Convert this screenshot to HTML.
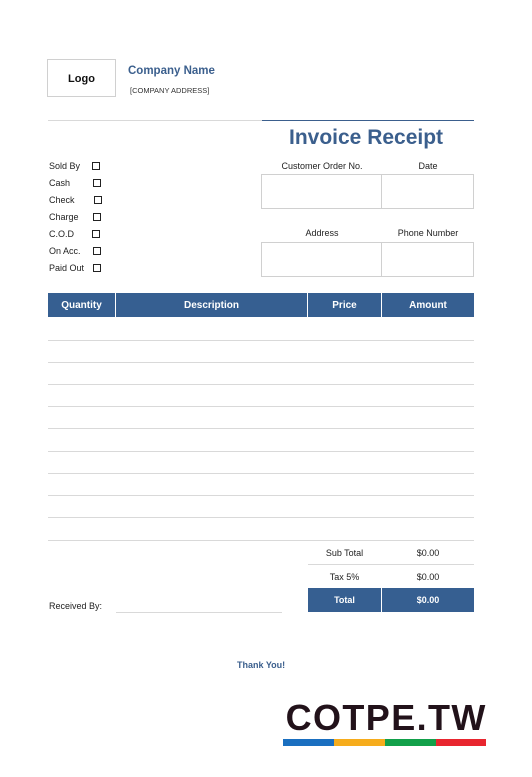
<!DOCTYPE html>
<html><head><style>
*{margin:0;padding:0;box-sizing:border-box}
body{width:532px;height:777px;background:#fff;position:relative;font-family:"Liberation Sans",sans-serif;color:#222;overflow:hidden}
.a{position:absolute}
.s{font-size:9px}
.cb{position:absolute;width:8px;height:8px;border:1px solid #222}
.hl{position:absolute;height:1px;background:#d9d9d9}
.box{position:absolute;border:1px solid #d0d0d0}
.hd{position:absolute;background:#365f91;color:#fff;font-size:10px;font-weight:bold;text-align:center;line-height:25px;height:24px;top:293px}
</style></head><body>
<div class="box" style="left:47px;top:59px;width:69px;height:38px;text-align:center;line-height:38px;font-size:11px;font-weight:bold;color:#111">Logo</div>
<div class="a" style="left:128px;top:65px;font-size:11.5px;font-weight:bold;color:#3b5f8d">Company Name</div>
<div class="a" style="left:130px;top:86px;font-size:7.5px;color:#333">[COMPANY ADDRESS]</div>
<div class="hl" style="left:48px;top:120px;width:214px"></div>
<div class="a" style="left:262px;top:120px;width:212px;height:1px;background:#3b5f8d"></div>
<div class="a" style="left:289px;top:126px;font-size:21px;font-weight:bold;color:#3b5f8d">Invoice Receipt</div>

<div class="a s" style="left:49px;top:161px">Sold By</div><div class="cb" style="left:92px;top:162px"></div>
<div class="a s" style="left:49px;top:178px">Cash</div><div class="cb" style="left:93px;top:179px"></div>
<div class="a s" style="left:49px;top:195px">Check</div><div class="cb" style="left:94px;top:196px"></div>
<div class="a s" style="left:49px;top:212px">Charge</div><div class="cb" style="left:93px;top:213px"></div>
<div class="a s" style="left:49px;top:229px">C.O.D</div><div class="cb" style="left:92px;top:230px"></div>
<div class="a s" style="left:49px;top:246px">On Acc.</div><div class="cb" style="left:93px;top:247px"></div>
<div class="a s" style="left:49px;top:263px">Paid Out</div><div class="cb" style="left:93px;top:264px"></div>

<div class="a s" style="left:262px;top:161px;width:120px;text-align:center">Customer Order No.</div>
<div class="a s" style="left:382px;top:161px;width:92px;text-align:center">Date</div>
<div class="box" style="left:261px;top:174px;width:121px;height:35px"></div>
<div class="box" style="left:381px;top:174px;width:93px;height:35px"></div>
<div class="a s" style="left:262px;top:228px;width:120px;text-align:center">Address</div>
<div class="a s" style="left:382px;top:228px;width:92px;text-align:center">Phone Number</div>
<div class="box" style="left:261px;top:242px;width:121px;height:35px"></div>
<div class="box" style="left:381px;top:242px;width:93px;height:35px"></div>

<div class="hd" style="left:48px;width:67px">Quantity</div>
<div class="hd" style="left:116px;width:191px">Description</div>
<div class="hd" style="left:308px;width:73px">Price</div>
<div class="hd" style="left:382px;width:92px">Amount</div>

<div class="hl" style="left:48px;top:340px;width:426px"></div>
<div class="hl" style="left:48px;top:362px;width:426px"></div>
<div class="hl" style="left:48px;top:384px;width:426px"></div>
<div class="hl" style="left:48px;top:406px;width:426px"></div>
<div class="hl" style="left:48px;top:428px;width:426px"></div>
<div class="hl" style="left:48px;top:451px;width:426px"></div>
<div class="hl" style="left:48px;top:473px;width:426px"></div>
<div class="hl" style="left:48px;top:495px;width:426px"></div>
<div class="hl" style="left:48px;top:517px;width:426px"></div>
<div class="hl" style="left:48px;top:540px;width:426px"></div>

<div class="a s" style="left:308px;top:548px;width:73px;text-align:center">Sub Total</div>
<div class="a s" style="left:382px;top:548px;width:92px;text-align:center">$0.00</div>
<div class="hl" style="left:308px;top:564px;width:166px"></div>
<div class="a s" style="left:308px;top:572px;width:73px;text-align:center">Tax 5%</div>
<div class="a s" style="left:382px;top:572px;width:92px;text-align:center">$0.00</div>
<div class="a" style="left:308px;top:588px;width:73px;height:24px;background:#365f91;color:#fff;font-size:9px;font-weight:bold;text-align:center;line-height:24px">Total</div>
<div class="a" style="left:382px;top:588px;width:92px;height:24px;background:#365f91;color:#fff;font-size:9px;font-weight:bold;text-align:center;line-height:24px">$0.00</div>

<div class="a s" style="left:49px;top:601px">Received By:</div>
<div class="hl" style="left:116px;top:612px;width:166px"></div>

<div class="a" style="left:237px;top:660px;font-size:9px;font-weight:bold;color:#3b5f8d">Thank You!</div>

<div class="a" style="left:273px;top:698px;width:225px;text-align:center;font-size:36px;font-weight:bold;color:#22121a;line-height:40px;letter-spacing:1.4px;padding-left:1.4px">COTPE.TW</div>
<div class="a" style="left:283px;top:739px;width:51px;height:7px;background:#1a6fc0"></div>
<div class="a" style="left:334px;top:739px;width:51px;height:7px;background:#f6ac1c"></div>
<div class="a" style="left:385px;top:739px;width:51px;height:7px;background:#12a04a"></div>
<div class="a" style="left:436px;top:739px;width:50px;height:7px;background:#e8262f"></div>
</body></html>
